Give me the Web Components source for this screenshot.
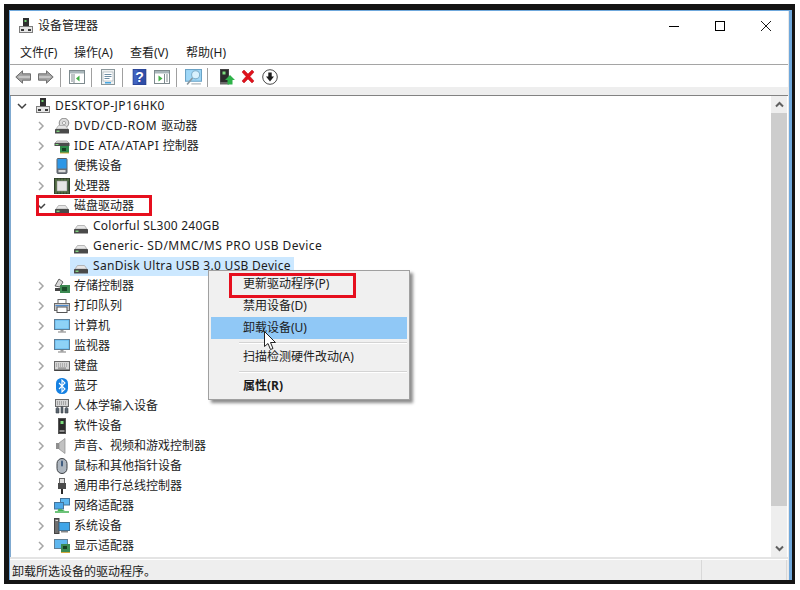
<!DOCTYPE html>
<html lang="zh-CN">
<head>
<meta charset="utf-8">
<title>设备管理器</title>
<style>
    html, body { margin: 0; padding: 0; background: #fff; }
    body {
        position: relative;
        width: 800px;
        height: 590px;
        overflow: hidden;
        font: 12px/16px "Noto Sans", "Noto Sans CJK SC", sans-serif;
        color: #1c1c1c;
    }
</style>
</head>
<body>

<dm-window>
    <dm-titlebar slot="title">设备管理器</dm-titlebar>
    <dm-menubar slot="menu">
        <span>文件(F)</span><span>操作(A)</span><span>查看(V)</span><span>帮助(H)</span>
    </dm-menubar>
    <dm-toolbar slot="tools"></dm-toolbar>
    <dm-tree slot="tree">
        <dm-row level="0" icon="computer" state="open"><span style="letter-spacing:.4px">DESKTOP-JP16HK0</span></dm-row>
        <dm-row level="1" icon="dvd" state="closed"><span style="letter-spacing:.64px">DVD/CD-ROM </span>驱动器</dm-row>
        <dm-row level="1" icon="ide" state="closed"><span style="letter-spacing:.47px">IDE ATA/ATAPI </span>控制器</dm-row>
        <dm-row level="1" icon="portable" state="closed">便携设备</dm-row>
        <dm-row level="1" icon="cpu" state="closed">处理器</dm-row>
        <dm-row level="1" icon="disk" state="open">磁盘驱动器</dm-row>
        <dm-row level="2" icon="disk"><span style="letter-spacing:.25px">Colorful SL300 240GB</span></dm-row>
        <dm-row level="2" icon="disk"><span style="letter-spacing:.42px">Generic- SD/MMC/MS PRO USB Device</span></dm-row>
        <dm-row level="2" icon="disk" selected><span style="letter-spacing:.3px">SanDisk Ultra USB 3.0 USB Device</span></dm-row>
        <dm-row level="1" icon="storage" state="closed">存储控制器</dm-row>
        <dm-row level="1" icon="printer" state="closed">打印队列</dm-row>
        <dm-row level="1" icon="monitor" state="closed">计算机</dm-row>
        <dm-row level="1" icon="monitor" state="closed">监视器</dm-row>
        <dm-row level="1" icon="keyboard" state="closed">键盘</dm-row>
        <dm-row level="1" icon="bluetooth" state="closed">蓝牙</dm-row>
        <dm-row level="1" icon="hid" state="closed">人体学输入设备</dm-row>
        <dm-row level="1" icon="software" state="closed">软件设备</dm-row>
        <dm-row level="1" icon="sound" state="closed">声音、视频和游戏控制器</dm-row>
        <dm-row level="1" icon="mouse" state="closed">鼠标和其他指针设备</dm-row>
        <dm-row level="1" icon="usb" state="closed">通用串行总线控制器</dm-row>
        <dm-row level="1" icon="network" state="closed">网络适配器</dm-row>
        <dm-row level="1" icon="system" state="closed">系统设备</dm-row>
        <dm-row level="1" icon="display" state="closed">显示适配器</dm-row>
    </dm-tree>
    <dm-scrollbar slot="scroll"></dm-scrollbar>
    <dm-statusbar slot="status">卸载所选设备的驱动程序。</dm-statusbar>
</dm-window>

<dm-context-menu>
    <dm-menu-item>更新驱动程序(P)</dm-menu-item>
    <dm-menu-item>禁用设备(D)</dm-menu-item>
    <dm-menu-item active>卸载设备(U)</dm-menu-item>
    <dm-menu-sep></dm-menu-sep>
    <dm-menu-item>扫描检测硬件改动(A)</dm-menu-item>
    <dm-menu-sep></dm-menu-sep>
    <dm-menu-item bold>属性(R)</dm-menu-item>
</dm-context-menu>

<dm-callout style="left:36px;top:195px;width:116px;height:21px"></dm-callout>
<dm-callout style="left:229px;top:273px;width:127px;height:25px"></dm-callout>
<dm-cursor></dm-cursor>

<script>
const DRIVE = `<path d="M2 11 L4.5 7.5 H11.5 L14 11 Z" fill="#e6e6e6" stroke="#a8a8a8" stroke-width=".8"/>
    <rect x="1" y="11" width="14" height="4.5" rx=".6" fill="#4a4a4a"/><rect x="2.5" y="12.6" width="3" height="1.3" fill="#86e086"/>`;

const ICONS = {
    computer: `<rect x="5" y="0" width="6" height="9" fill="#2f2f2f"/><rect x="6.5" y="2" width="2" height="2" fill="#6fd06f"/>
        <rect x="1.5" y="8.5" width="13" height="6" fill="#e6e6e6" stroke="#7d7d7d"/>
        <rect x="3" y="11" width="3" height="2" fill="#3a3a3a"/><rect x="10" y="11" width="3" height="2" fill="#3a3a3a"/>`,
    disk: DRIVE,
    dvd: `<circle cx="10" cy="5" r="4.8" fill="#dcdcdc" stroke="#8c8c8c"/><circle cx="10" cy="5" r="1.6" fill="#fafafa" stroke="#8c8c8c" stroke-width=".7"/>` + DRIVE,
    ide: `<path d="M1 5 L3 3 H13 L15 5 Z" fill="#e2e2e2" stroke="#9a9a9a" stroke-width=".8"/><rect x="0.5" y="5" width="15" height="3" fill="#4d4d4d"/>
        <rect x="1.5" y="6" width="3" height="1" fill="#7ddc7d"/><rect x="6" y="8" width="9" height="7" fill="#2f8a4a"/><rect x="8" y="10" width="4" height="3" fill="#173f24"/>
        <path d="M6 15h9" stroke="#d1a93b"/>`,
    portable: `<rect x="3" y="0.5" width="10" height="15" rx="1" fill="#6a7078" stroke="#5b6068"/><rect x="3.5" y="1" width="9" height="9.5" fill="#2e97e6"/><rect x="4.5" y="12" width="7" height="2.2" fill="#d9d9d9"/>`,
    cpu: `<rect x="0.5" y="0.5" width="15" height="15" fill="#3c5a3a" stroke="#2e3d2b"/><rect x="3" y="3" width="10" height="10" fill="#e6e6e6" stroke="#9a9a9a" stroke-width=".6"/>
        <path d="M2 .5V16M5 .5V3M8 .5V3M11 .5V3M14 .5V3M5 13V16M8 13V16M11 13V16M14 13V16" stroke="#8f9a5a" stroke-width=".5"/>`,
    storage: `<path d="M1 8 L5 1 L9 4 L6 9 Z" fill="#d8d8d8" stroke="#555" stroke-width=".9"/><rect x="1" y="10" width="7" height="3" fill="#444"/>
        <rect x="6" y="7" width="10" height="8" fill="#3c8a52"/><rect x="8" y="9" width="5" height="4" fill="#1b4d2a"/>`,
    printer: `<rect x="4" y="1.5" width="8" height="4" fill="#fff" stroke="#6a6a6a"/><rect x="0.5" y="5.5" width="15" height="7" fill="#c9c9c9" stroke="#6a6a6a"/>
        <rect x="3" y="9" width="10" height="5.5" fill="#fff" stroke="#555"/><rect x="1.5" y="7" width="13" height="1.2" fill="#4f8ccf"/>`,
    monitor: `<rect x="0.5" y="1.5" width="15" height="10" fill="#5eb7ef" stroke="#5f7f97"/><rect x="1.5" y="2.5" width="13" height="8" fill="#8ed2f7"/>
        <rect x="6.5" y="12" width="3" height="1.5" fill="#9a9a9a"/><rect x="4" y="13.5" width="8" height="1" fill="#7f7f7f"/>`,
    keyboard: `<rect x="0.5" y="3.5" width="15" height="9" fill="#d5d5d5" stroke="#6a6a6a"/>
        <path d="M2 6h12M2 8h12" stroke="#888" stroke-dasharray="1 1"/><rect x="4" y="9.5" width="8" height="1.2" fill="#888"/><rect x="0.5" y="11.5" width="15" height="1.5" fill="#444"/>`,
    bluetooth: `<rect x="2" y="0" width="12" height="16" rx="5.5" fill="#1681e2"/><path d="M5 5l6 6-3 3V2l3 3-6 6" fill="none" stroke="#fff" stroke-width="1.1"/>`,
    hid: `<rect x="1.5" y="1.5" width="13" height="7" fill="#d5d5d5" stroke="#6a6a6a"/><path d="M3 4h10M3 6h10" stroke="#777" stroke-dasharray="1 1"/>
        <path d="M2 15 V11 C2 9 5 9 5 11 V15 Z M7 15 V10 C7 8 9 8 9 10 V15 Z M11 15 V11 C11 9 14 9 14 11 V15 Z" fill="#5b6570" stroke="#3a4047" stroke-width=".6"/>`,
    software: `<rect x="4.5" y="0.5" width="7" height="15" fill="#2c2c2c" stroke="#555"/><rect x="6.5" y="3" width="3" height="3" fill="#7ddc7d"/><rect x="5.5" y="12" width="5" height="2" fill="#8a8a8a"/>`,
    sound: `<path d="M2 5h3v6H2z" fill="#8f8f8f"/><path d="M5 5 L11 0.5 V15.5 L5 11 Z" fill="#c2c2c2" stroke="#8a8a8a" stroke-width=".7"/>`,
    mouse: `<rect x="3" y="0.5" width="10" height="15" rx="5" fill="#aeb6bf" stroke="#3d4045"/><rect x="7" y="2.5" width="2" height="6" rx="1" fill="#3f5c80"/>`,
    usb: `<rect x="5.5" y="0.5" width="5" height="5" fill="#e0e0e0" stroke="#666"/><rect x="4" y="5" width="8" height="6" fill="#4a4a4a"/><rect x="7" y="11" width="2" height="5" fill="#2a2a2a"/>`,
    network: `<rect x="6.5" y="0.5" width="9" height="6.5" fill="#5eb7ef" stroke="#44749a"/><rect x="0.5" y="4.5" width="9" height="6.5" fill="#4da8e8" stroke="#44749a"/>
        <path d="M5 11v2M1 14h14" stroke="#3fb04f" stroke-width="1.6"/><path d="M3 13h8l-4-2z" fill="#3fb04f"/>`,
    system: `<rect x="0.5" y="0.5" width="4.5" height="15" fill="#6f6f6f" stroke="#444"/><rect x="1.5" y="2" width="2.5" height="1" fill="#ddd"/>
        <rect x="5" y="4.5" width="10.5" height="8" fill="#3fa5e8" stroke="#417193"/><rect x="7" y="13" width="7" height="1.5" fill="#888"/>`,
    display: `<rect x="0.5" y="1.5" width="13" height="9" fill="#5eb7ef" stroke="#5f7f97"/><rect x="7" y="6" width="9" height="8" fill="#3c8a52"/>
        <rect x="9" y="8" width="4" height="3" fill="#173f24"/><path d="M7 14.5h9" stroke="#d1a93b"/>`,
    back: `<path d="M.8 8 L7.5 1.8 V4.8 H15.5 V11.2 H7.5 V14.2 Z" fill="#a3a3a3" stroke="#6f6f6f"/><path d="M3.5 8 H15" stroke="#d0d0d0" stroke-width="1.5"/>`,
    forward: `<path d="M15.2 8 L8.5 1.8 V4.8 H.5 V11.2 H8.5 V14.2 Z" fill="#a3a3a3" stroke="#6f6f6f"/><path d="M1 8 H12.5" stroke="#d0d0d0" stroke-width="1.5"/>`,
    paneleft: `<rect x="0.5" y="1.5" width="15" height="13" fill="#fff" stroke="#7e8a8e"/><rect x="1" y="2" width="14" height="2.5" fill="#a9b6ba"/>
        <path d="M2 6h2M2 8h2M2 10h2M2 12h2" stroke="#7e8a8e"/><path d="M5 5v9" stroke="#7e8a8e"/><path d="M7 9.5 L10.5 6.5 V12.5 Z" fill="#42b044"/>`,
    pageprops: `<rect x="1.5" y="0.5" width="13" height="15" fill="#eef1f2" stroke="#8b979b"/><rect x="3" y="3" width="10" height="9" fill="#fff" stroke="#9aa6aa" stroke-width=".6"/>
        <path d="M4.5 5.5h7M4.5 7.5h7M4.5 9.5h5" stroke="#6d8da3"/><rect x="5" y="13" width="6" height="1.5" fill="#47a6e0"/>`,
    help: `<rect x="1" y="0" width="13" height="16" fill="#2f4ea8" stroke="#22397c" stroke-width=".6"/><rect x="1.5" y="1" width="4" height="14" fill="#4063c0"/>
        <text x="7.5" y="13" font-family="Liberation Sans, sans-serif" font-size="14" font-weight="bold" text-anchor="middle" fill="#fff">?</text>`,
    paneright: `<rect x="0.5" y="1.5" width="15" height="13" fill="#fff" stroke="#7e8a8e"/><rect x="1" y="2" width="14" height="2.5" fill="#a9b6ba"/>
        <path d="M12 6h2M12 8h2M12 10h2M12 12h2" stroke="#7e8a8e"/><path d="M10.5 5v9" stroke="#7e8a8e"/><path d="M4.5 6.5 L8.5 9.5 L4.5 12.5 Z" fill="#42b044"/>`,
    scan: `<rect x="0.5" y="0.5" width="15" height="11" fill="#9fd8f8" stroke="#6ba3c6"/><circle cx="10" cy="5.5" r="3.8" fill="#d8f1fd" stroke="#7fb0cc"/><path d="M7 8.5 L2 14.5" stroke="#8a969d" stroke-width="1.5"/><path d="M6 14h9" stroke="#b0b8bc" stroke-width="1.2"/>`,
    update: `<rect x="1.5" y="0.5" width="8" height="13" fill="#2c2c2c" stroke="#444"/><rect x="3.5" y="2.5" width="3" height="3" fill="#7ddc7d"/><rect x="1" y="13" width="9" height="2.5" fill="#6a6a6a"/>
        <path d="M11 6 L16 11 H13.5 V15.5 H8.5 V11 H6 Z" fill="#2fb24a"/>`,
    remove: `<path d="M2 3 L4 1 L8 5 L12 1 L14 3 L10 7.5 L14 12 L12 14 L8 10 L4 14 L2 12 L6 7.5 Z" fill="#e0121c" stroke="#b70e16" stroke-width=".5"/>`,
    install: `<circle cx="8" cy="8" r="7.3" fill="#fff" stroke="#4a4a4a"/><path d="M6.3 3.5h3.4v4H12L8 12.5 4 7.5h2.3z" fill="#1c1c1c"/>`
};

class DmIcon extends HTMLElement {
    constructor() {
        super();
        this._shadowRoot = this.attachShadow({mode: "open"});
    }
    connectedCallback() {
        this.render();
    }
    render() {
        const size = this.getAttribute("size") || 16;
        this._shadowRoot.innerHTML = `
            <style>
                :host { display: block; flex: none; width: ${size}px; height: ${size}px; }
                svg { display: block; width: 100%; height: 100%; }
            </style>
            <svg viewBox="0 0 16 16">${ICONS[this.getAttribute("name")] || ""}</svg>
        `;
    }
}
customElements.define("dm-icon", DmIcon);

class DmWindow extends HTMLElement {
    constructor() {
        super();
        this._shadowRoot = this.attachShadow({mode: "open"});
    }
    connectedCallback() {
        this._shadowRoot.innerHTML = `
            <style>
                :host {
                    display: block;
                    box-sizing: border-box;
                    margin: 4px 0 0 4px;
                    width: 791px;
                    height: 580px;
                    padding: 6px 3px 4px 5px;
                    background: #141414;
                }
                .inner {
                    box-sizing: border-box;
                    height: 100%;
                    display: flex;
                    flex-direction: column;
                    background: #fff;
                    border-top: 1px solid #6fa8dc;
                    border-left: 1px solid #6fa8dc;
                    border-right: 3px solid #6fa8dc;
                    box-shadow: inset -1px 0 0 #e8e8e8;
                }
                .strip {
                    height: 8px;
                    background: #eeeeee;
                    margin-right: 1px;
                    border-bottom: 1px solid #828282;
                }
                .body { display: flex; height: 461px; margin-right: 1px; }
                .body ::slotted(dm-tree) { flex: 1; }
            </style>
            <div class="inner">
                <slot name="title"></slot>
                <slot name="menu"></slot>
                <slot name="tools"></slot>
                <div class="strip"></div>
                <div class="body">
                    <slot name="tree"></slot>
                    <slot name="scroll"></slot>
                </div>
                <slot name="status"></slot>
            </div>
        `;
    }
}
customElements.define("dm-window", DmWindow);

class DmTitlebar extends HTMLElement {
    constructor() {
        super();
        this._shadowRoot = this.attachShadow({mode: "open"});
    }
    connectedCallback() {
        this._shadowRoot.innerHTML = `
            <style>
                :host {
                    display: flex;
                    align-items: center;
                    height: 29px;
                    padding-left: 8px;
                    color: #222;
                }
                .text { margin-left: 4px; }
                .buttons { margin-left: auto; display: flex; height: 100%; }
                .btn { width: 46px; display: flex; align-items: center; justify-content: center; }
                svg { display: block; }
            </style>
            <dm-icon name="computer"></dm-icon>
            <span class="text"><slot></slot></span>
            <div class="buttons">
                <div class="btn"><svg width="10" height="10"><path d="M0 5.5h10" stroke="#000"/></svg></div>
                <div class="btn"><svg width="10" height="10"><rect x=".5" y=".5" width="9" height="9" fill="none" stroke="#000"/></svg></div>
                <div class="btn"><svg width="10" height="10"><path d="M0 0L10 10M10 0L0 10" stroke="#000" stroke-width=".9"/></svg></div>
            </div>
        `;
    }
}
customElements.define("dm-titlebar", DmTitlebar);

class DmMenubar extends HTMLElement {
    constructor() {
        super();
        this._shadowRoot = this.attachShadow({mode: "open"});
    }
    connectedCallback() {
        this._shadowRoot.innerHTML = `
            <style>
                :host {
                    display: block;
                    height: 24px;
                    border-bottom: 1px solid #a5a5a5;
                    margin-right: 1px;
                }
                div {
                    display: flex;
                    gap: 16px;
                    align-items: center;
                    height: 100%;
                    padding: 2px 0 0 10px;
                    box-sizing: border-box;
                }
                ::slotted(span) { display: block; width: 40px; white-space: nowrap; }
                ::slotted(span:first-child) { width: 38px; }
            </style>
            <div><slot></slot></div>
        `;
    }
}
customElements.define("dm-menubar", DmMenubar);

class DmToolbar extends HTMLElement {
    constructor() {
        super();
        this._shadowRoot = this.attachShadow({mode: "open"});
    }
    connectedCallback() {
        const sep = m => `<i style="margin:0 ${m[1]}px 0 ${m[0]}px"></i>`;
        this._shadowRoot.innerHTML = `
            <style>
                :host {
                    display: flex;
                    align-items: center;
                    box-sizing: border-box;
                    height: 22px;
                    padding: 2px 0 0 5px;
                }
                i { display: block; width: 1px; height: 19px; background: #a0a0a0; flex: none; }
                .g5 { margin-left: 5px; }
                .g6 { margin-left: 6px; }
                .g7 { margin-left: 7px; }
            </style>
            <dm-icon name="back"></dm-icon>
            <dm-icon name="forward" class="g7"></dm-icon>
            ${sep([6, 8])}
            <dm-icon name="paneleft"></dm-icon>
            ${sep([6, 8])}
            <dm-icon name="pageprops"></dm-icon>
            ${sep([6, 9])}
            <dm-icon name="help"></dm-icon>
            <dm-icon name="paneright" class="g6"></dm-icon>
            ${sep([6, 8])}
            <dm-icon name="scan" size="17"></dm-icon>
            ${sep([5, 11])}
            <dm-icon name="update"></dm-icon>
            <dm-icon name="remove" class="g5"></dm-icon>
            <dm-icon name="install" class="g6"></dm-icon>
        `;
    }
}
customElements.define("dm-toolbar", DmToolbar);

class DmTree extends HTMLElement {
    constructor() {
        super();
        this._shadowRoot = this.attachShadow({mode: "open"});
    }
    connectedCallback() {
        this._shadowRoot.innerHTML = `
            <style>
                :host {
                    display: block;
                    background: #fff;
                    border-left: 1px solid #7fa9d0;
                    overflow: hidden;
                }
            </style>
            <slot></slot>
        `;
    }
}
customElements.define("dm-tree", DmTree);

class DmRow extends HTMLElement {
    constructor() {
        super();
        this._shadowRoot = this.attachShadow({mode: "open"});
    }
    connectedCallback() {
        const level = Number(this.getAttribute("level"));
        const state = this.getAttribute("state");
        let chevron = "";
        if (state === "closed") {
            chevron = `<svg width="12" height="12"><path d="M4 2l4 4-4 4" fill="none" stroke="#a6a6a6" stroke-width="1.5"/></svg>`;
        } else if (state === "open") {
            chevron = `<svg width="12" height="12"><path d="M2 4l4 4 4-4" fill="none" stroke="#404040" stroke-width="1.5"/></svg>`;
        }
        this._shadowRoot.innerHTML = `
            <style>
                :host {
                    display: flex;
                    align-items: center;
                    height: 20px;
                    padding-left: ${5 + 19 * level}px;
                }
                .slot { width: 12px; flex: none; display: flex; }
                .label {
                    display: flex;
                    align-items: center;
                    height: 19px;
                    margin-left: 4px;
                    padding: 0 3px;
                }
                :host([selected]) .label { background: #cce8ff; }
                .text { margin-left: 4px; white-space: pre; }
            </style>
            <div class="slot">${chevron}</div>
            <div class="label">
                <dm-icon name="${this.getAttribute("icon")}"></dm-icon>
                <span class="text"><slot></slot></span>
            </div>
        `;
    }
}
customElements.define("dm-row", DmRow);

class DmScrollbar extends HTMLElement {
    constructor() {
        super();
        this._shadowRoot = this.attachShadow({mode: "open"});
    }
    connectedCallback() {
        this._shadowRoot.innerHTML = `
            <style>
                :host {
                    display: flex;
                    flex-direction: column;
                    flex: none;
                    width: 16px;
                    margin-right: 1px;
                    background: #eeeeee;
                }
                .arrow { height: 17px; display: flex; align-items: center; justify-content: center; }
                .thumb { height: 393px; background: #cdcdcd; }
                .rest { flex: 1; }
            </style>
            <div class="arrow"><svg width="9" height="7"><path d="M1 5.5l3.5-3.5 3.5 3.5" fill="none" stroke="#606060" stroke-width="2"/></svg></div>
            <div class="thumb"></div>
            <div class="rest"></div>
            <div class="arrow"><svg width="9" height="7"><path d="M1 1.5l3.5 3.5 3.5-3.5" fill="none" stroke="#606060" stroke-width="2"/></svg></div>
        `;
    }
}
customElements.define("dm-scrollbar", DmScrollbar);

class DmStatusbar extends HTMLElement {
    constructor() {
        super();
        this._shadowRoot = this.attachShadow({mode: "open"});
    }
    connectedCallback() {
        this._shadowRoot.innerHTML = `
            <style>
                :host {
                    display: flex;
                    flex: 1;
                    min-height: 0;
                    margin-right: 1px;
                    border-top: 2px solid #e4e4e4;
                    padding-top: 1px;
                    background: #eeeeee;
                    box-shadow: inset 0 1px 0 #fff;
                }
                .cell { display: flex; align-items: center; }
                .main { flex: 1; padding: 4px 0 0 2px; border-right: 1px solid #d8d8d8; }
                .mid { width: 84px; border-right: 1px solid #d8d8d8; }
                .end { width: 1px; }
            </style>
            <div class="cell main"><slot></slot></div>
            <div class="cell mid"></div>
            <div class="cell end"></div>
        `;
    }
}
customElements.define("dm-statusbar", DmStatusbar);

class DmContextMenu extends HTMLElement {
    constructor() {
        super();
        this._shadowRoot = this.attachShadow({mode: "open"});
    }
    connectedCallback() {
        this._shadowRoot.innerHTML = `
            <style>
                :host {
                    position: absolute;
                    left: 208px;
                    top: 270px;
                    box-sizing: border-box;
                    width: 202px;
                    height: 130px;
                    padding: 2px 2px;
                    display: block;
                    background: #f0f0f0;
                    border: 1px solid #a0a0a0;
                    box-shadow: 3px 3px 3px rgba(0, 0, 0, .45);
                }
            </style>
            <slot></slot>
        `;
    }
}
customElements.define("dm-context-menu", DmContextMenu);

class DmMenuItem extends HTMLElement {
    constructor() {
        super();
        this._shadowRoot = this.attachShadow({mode: "open"});
    }
    connectedCallback() {
        this._shadowRoot.innerHTML = `
            <style>
                :host {
                    display: flex;
                    align-items: center;
                    box-sizing: border-box;
                    height: 22px;
                    padding-left: 32px;
                    white-space: nowrap;
                }
                :host([active]) { background: #90c8f6; }
                :host([bold]) { font-weight: bold; }
            </style>
            <slot></slot>
        `;
    }
}
customElements.define("dm-menu-item", DmMenuItem);

class DmMenuSep extends HTMLElement {
    constructor() {
        super();
        this._shadowRoot = this.attachShadow({mode: "open"});
    }
    connectedCallback() {
        this._shadowRoot.innerHTML = `
            <style>
                :host {
                    display: block;
                    height: 1px;
                    margin: 3px 0 3px 28px;
                    background: #d4d4d4;
                    box-shadow: 0 1px 0 #fff;
                }
            </style>
        `;
    }
}
customElements.define("dm-menu-sep", DmMenuSep);

class DmCallout extends HTMLElement {
    constructor() {
        super();
        this._shadowRoot = this.attachShadow({mode: "open"});
    }
    connectedCallback() {
        this._shadowRoot.innerHTML = `
            <style>
                :host {
                    position: absolute;
                    box-sizing: border-box;
                    border: 3px solid #e60f1e;
                    pointer-events: none;
                }
            </style>
        `;
    }
}
customElements.define("dm-callout", DmCallout);

class DmCursor extends HTMLElement {
    constructor() {
        super();
        this._shadowRoot = this.attachShadow({mode: "open"});
    }
    connectedCallback() {
        this._shadowRoot.innerHTML = `
            <style>
                :host { position: absolute; left: 264px; top: 331px; width: 13px; height: 20px; }
                svg { display: block; }
            </style>
            <svg width="13" height="20"><path d="M.5 .5V15.5L4 12.5L6.5 18.5L9 17.5L6.5 11.5H11.5Z" fill="#fff" stroke="#222"/></svg>
        `;
    }
}
customElements.define("dm-cursor", DmCursor);
</script>
</body>
</html>
